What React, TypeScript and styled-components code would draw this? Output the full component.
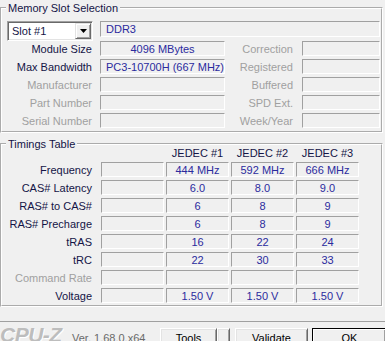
import React from 'react';
import styled, { createGlobalStyle } from 'styled-components';

const GlobalStyle = createGlobalStyle`
  html, body {
    margin: 0;
    padding: 0;
    background: #f0f0f0;
  }
  body {
    font-family: 'Liberation Sans', Arial, sans-serif;
    font-size: 11px;
  }
`;

const Window = styled.div`
  width: 385px;
  height: 341px;
  overflow: hidden;
  background: #f0f0f0;
  display: flex;
  flex-direction: column;
`;

const Page = styled.div`
  box-sizing: border-box;
  height: 322px;
  flex: none;
  border-bottom: 1px solid #a0a0a0;
`;

const Group = styled.fieldset<{ $top: number; $bottom: number }>`
  margin: ${(p) => p.$top}px 2px 0 0;
  padding: 0 1px ${(p) => p.$bottom}px 3px;
  border: 2px groove #fff;
  min-width: 0;
`;

const Legend = styled.legend`
  margin-left: 1px;
  padding: 0 2px;
  line-height: 12px;
  color: #141446;
`;

const SlotBody = styled.div`
  padding-top: 7px;
  display: flex;
  flex-direction: column;
  gap: 3px;
`;

const TopRow = styled.div`
  display: flex;
  height: 20px;
  margin-bottom: -3px;
`;

const Row = styled.div`
  display: flex;
  height: 15px;
`;

const Label = styled.div<{ $w: number; $dim?: boolean }>`
  flex: none;
  width: ${(p) => p.$w}px;
  box-sizing: border-box;
  padding-top: 2px;
  line-height: 13px;
  text-align: right;
  white-space: nowrap;
  color: ${(p) => (p.$dim ? '#a0a0a0' : '#141446')};
`;

const Field = styled.div<{ $w: number; $gap?: number; $center?: boolean; $h?: number }>`
  flex: none;
  box-sizing: border-box;
  width: ${(p) => p.$w}px;
  height: ${(p) => p.$h ?? 15}px;
  margin-left: ${(p) => p.$gap ?? 0}px;
  padding: 1px 5px 0;
  border: 1px solid;
  border-color: #a0a0a0 #fff #fff #a0a0a0;
  line-height: 13px;
  color: #2b2b9e;
  white-space: nowrap;
  text-align: ${(p) => (p.$center ? 'center' : 'left')};
`;

const Combo = styled.div`
  box-sizing: border-box;
  width: 86px;
  height: 20px;
  margin-left: 2px;
  padding-left: 3px;
  background: #fff;
  border: 1px solid;
  border-color: #a0a0a0 #fff #fff #a0a0a0;
  box-shadow: inset 1px 1px #696969, inset -1px -1px #e3e3e3;
  display: flex;
  align-items: center;
  justify-content: space-between;
  color: #141446;
`;

const ComboText = styled.span`
  padding-left: 1px;
  line-height: 13px;
`;

const ComboArrow = styled.div`
  box-sizing: border-box;
  width: 16px;
  height: 16px;
  margin-right: 1px;
  background: #f0f0f0;
  border: 1px solid;
  border-color: #e3e3e3 #696969 #696969 #e3e3e3;
  box-shadow: inset 1px 1px #fff, inset -1px -1px #a0a0a0;
  display: flex;
  align-items: center;
  justify-content: center;
`;

const TimingsGrid = styled.div`
  display: grid;
  grid-template-columns: 94px repeat(4, 63px);
  grid-template-rows: 9px repeat(8, 15px);
  column-gap: 2px;
  row-gap: 3px;
`;

const Head = styled.div`
  margin-top: -2px;
  line-height: 11px;
  text-align: center;
  white-space: nowrap;
  color: #141446;
`;

const TLabel = styled(Label)`
  padding-right: 7px;
`;

const Cell = styled.div`
  box-sizing: border-box;
  height: 15px;
  padding-top: 1px;
  border: 1px solid;
  border-color: #a0a0a0 #fff #fff #a0a0a0;
  line-height: 13px;
  text-align: center;
  color: #2b2b9e;
  white-space: nowrap;
`;

const Footer = styled.div`
  display: flex;
  align-items: flex-start;
  height: 19px;
`;

const Logo = styled.div`
  margin-top: 1px;
  width: 72px;
  flex: none;
  font-size: 21px;
  line-height: 24px;
  font-weight: bold;
  font-style: italic;
  letter-spacing: -0.5px;
  color: #bdbdbd;
  text-shadow: 1px 1px #fff;
`;

const Version = styled.div`
  width: 88px;
  flex: none;
  margin-top: 10px;
  line-height: 13px;
  color: #6a6a6a;
  white-space: nowrap;
`;

const Button = styled.div<{ $w: number; $gap?: number; $default?: boolean }>`
  flex: none;
  box-sizing: border-box;
  width: ${(p) => p.$w}px;
  height: 23px;
  margin-top: 6px;
  margin-left: ${(p) => p.$gap ?? 0}px;
  padding-top: 3px;
  line-height: 13px;
  text-align: center;
  color: #000;
  background: #f0f0f0;
  border: 1px solid;
  border-color: ${(p) => (p.$default ? '#000' : '#fff #696969 #696969 #fff')};
  box-shadow: ${(p) =>
    p.$default
      ? 'inset 1px 1px #fff, inset -1px -1px #696969, inset -2px -2px #a0a0a0'
      : 'inset 1px 1px #e3e3e3, inset -1px -1px #a0a0a0'};
  display: flex;
  justify-content: center;
`;

type SlotRow = { left: string; value: string; center?: boolean; right: string; dim: boolean };

const slotRows: SlotRow[] = [
  { left: 'Module Size', value: '4096 MBytes', center: true, right: 'Correction', dim: false },
  { left: 'Max Bandwidth', value: 'PC3-10700H (667 MHz)', right: 'Registered', dim: false },
  { left: 'Manufacturer', value: '', right: 'Buffered', dim: true },
  { left: 'Part Number', value: '', right: 'SPD Ext.', dim: true },
  { left: 'Serial Number', value: '', right: 'Week/Year', dim: true },
];

const timings: { label: string; values: string[]; dim?: boolean }[] = [
  { label: 'Frequency', values: ['444 MHz', '592 MHz', '666 MHz'] },
  { label: 'CAS# Latency', values: ['6.0', '8.0', '9.0'] },
  { label: 'RAS# to CAS#', values: ['6', '8', '9'] },
  { label: 'RAS# Precharge', values: ['6', '8', '9'] },
  { label: 'tRAS', values: ['16', '22', '24'] },
  { label: 'tRC', values: ['22', '30', '33'] },
  { label: 'Command Rate', values: ['', '', ''], dim: true },
  { label: 'Voltage', values: ['1.50 V', '1.50 V', '1.50 V'] },
];

function Triangle() {
  return (
    <svg width="7" height="4" viewBox="0 0 7 4">
      <path d="M0 0h7L3.5 4z" fill="#000" />
    </svg>
  );
}

export default function App() {
  return (
    <Window>
      <GlobalStyle />
      <Page>
        <Group $top={2} $bottom={3}>
          <Legend>Memory Slot Selection</Legend>
          <SlotBody>
            <TopRow>
              <Combo>
                <ComboText>Slot #1</ComboText>
                <ComboArrow>
                  <Triangle />
                </ComboArrow>
              </Combo>
              <Field $w={280} $gap={7} $h={16}>
                DDR3
              </Field>
            </TopRow>
            {slotRows.map((r) => (
              <Row key={r.left}>
                <Label $w={87} $dim={r.dim}>
                  {r.left}
                </Label>
                <Field $w={125} $gap={8} $center={r.center}>
                  {r.value}
                </Field>
                <Label $w={68} $dim>
                  {r.right}
                </Label>
                <Field $w={78} $gap={9} />
              </Row>
            ))}
          </SlotBody>
        </Group>
        <Group $top={5} $bottom={2}>
          <Legend>Timings Table</Legend>
          <TimingsGrid>
            <div />
            <div />
            <Head>JEDEC #1</Head>
            <Head>JEDEC #2</Head>
            <Head>JEDEC #3</Head>
            {timings.map((t) => (
              <React.Fragment key={t.label}>
                <TLabel $w={94} $dim={t.dim}>
                  {t.label}
                </TLabel>
                <Cell />
                {t.values.map((v, i) => (
                  <Cell key={i}>{v}</Cell>
                ))}
              </React.Fragment>
            ))}
          </TimingsGrid>
        </Group>
      </Page>
      <Footer>
        <Logo>CPU-Z</Logo>
        <Version>Ver. 1.68.0.x64</Version>
        <Button $w={57}>Tools</Button>
        <Button $w={13}>
          <div style={{ marginTop: 3 }}>
            <Triangle />
          </div>
        </Button>
        <Button $w={73} $gap={5}>
          Validate
        </Button>
        <Button $w={75} $gap={4} $default>
          OK
        </Button>
      </Footer>
    </Window>
  );
}
